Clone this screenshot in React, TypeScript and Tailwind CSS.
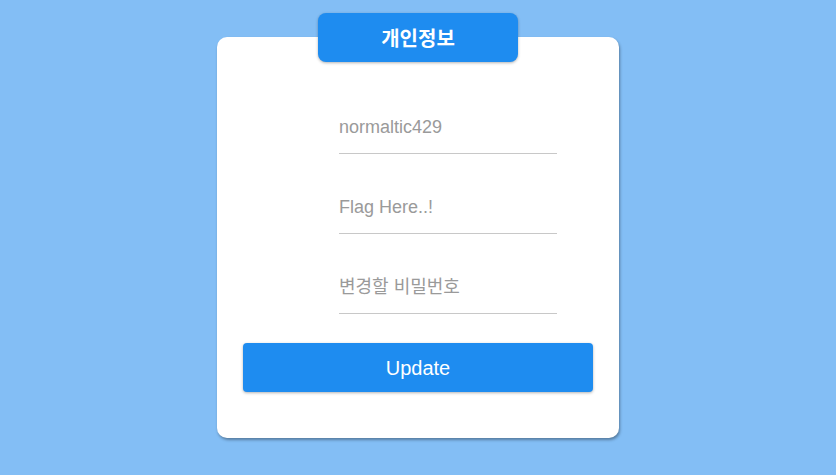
import React from "react";

function Field({ placeholder, type = "text" }: { placeholder: string; type?: string }) {
  return (
    <input
      type={type}
      placeholder={placeholder}
      className="block h-[42px] w-[218px] border-b border-[#c8c8c8] bg-transparent pb-[10px] text-[18px] text-[#333] outline-none placeholder:text-[#9a9a9a] font-['Liberation_Sans','Noto_Sans_CJK_KR',sans-serif]"
    />
  );
}

export default function App() {
  return (
    <div className="flex min-h-[475px] w-full justify-center bg-[#83bef5] pt-[13px]">
      <div className="relative mt-[24px] h-[401px] w-[402px] rounded-[10px] bg-white shadow-[1px_2px_3px_rgba(0,0,0,0.35)]">
        <div className="absolute left-[101px] top-[-24px] flex h-[49px] w-[200px] items-center justify-center rounded-[8px] bg-[#1e8cf0] shadow-[0_1px_3px_rgba(0,0,0,0.3)]">
          <span className="text-[20px] font-bold text-white font-['Noto_Sans_CJK_KR',sans-serif]">개인정보</span>
        </div>
        <div className="flex flex-col items-center pt-[75px]">
          <div className="ml-[60px] flex flex-col gap-[38px]">
            <Field placeholder="normaltic429" />
            <Field placeholder="Flag Here..!" />
            <Field placeholder="변경할 비밀번호" type="password" />
          </div>
          <button
            type="button"
            className="mt-[29px] h-[49px] w-[350px] rounded-[4px] bg-[#1e8cf0] text-[20px] text-white shadow-[0_1px_3px_rgba(0,0,0,0.3)] font-['Liberation_Sans',sans-serif]"
          >
            Update
          </button>
        </div>
      </div>
    </div>
  );
}
